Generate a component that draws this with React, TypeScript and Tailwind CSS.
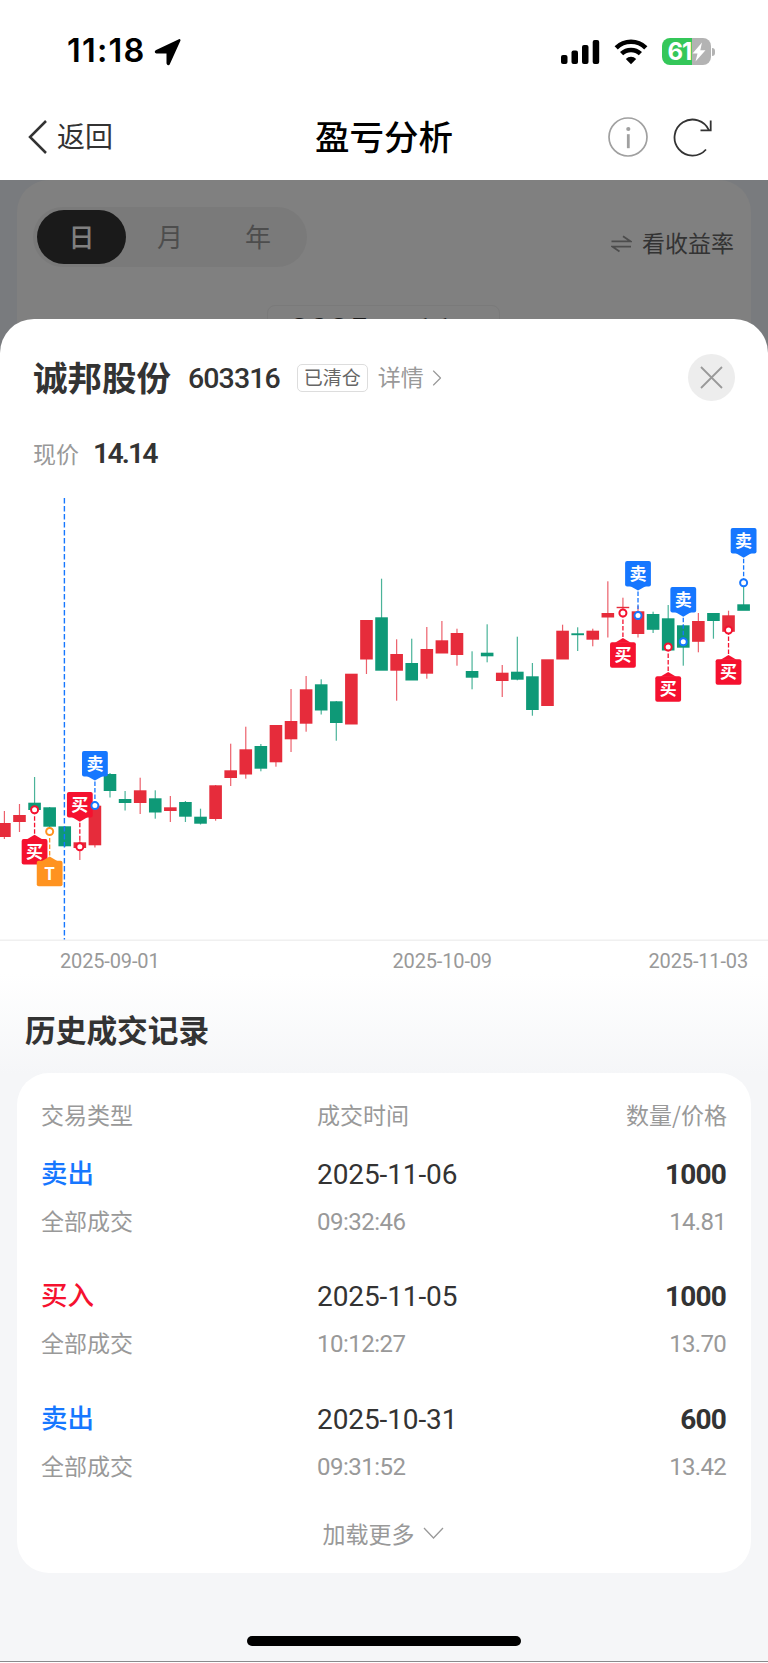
import { ChevronRight } from 'lucide-react';

type Candle = [open: 'r' | 'g', top: number, bottom: number, high: number, low: number];

// Body top/bottom and wick high/low, in chart pixels
const candles: Candle[] = [
  ['r', 823, 837, 811, 839], ['r', 815, 822, 804, 832], ['g', 802.7, 810, 777, 812], ['g', 807.3, 826.7, 807, 832],
  ['g', 826.3, 846.3, 826, 847], ['r', 842.3, 848, 840, 860], ['r', 805.7, 845.3, 805, 847.5], ['g', 774, 791, 773, 797.5],
  ['g', 799, 803, 791, 810.5], ['r', 790.3, 803, 777.7, 814], ['g', 798.3, 812.5, 790.3, 818.7], ['r', 807.3, 811, 796, 822],
  ['g', 802, 816.7, 801, 822], ['g', 816.7, 823.7, 808.7, 824.5], ['r', 785.3, 819, 785, 820.7], ['r', 770.3, 778, 743.7, 786],
  ['r', 749.3, 774.5, 726.7, 778.7], ['g', 746, 768.7, 744, 771.3], ['r', 725, 762.3, 725, 766.7], ['r', 721, 739.3, 689, 752],
  ['r', 689.3, 723.7, 676, 731.7], ['g', 684.3, 710.5, 679.3, 714.5], ['g', 701.3, 723, 701, 740.7], ['r', 673.7, 724.5, 674, 724],
  ['r', 620, 659.5, 620, 674], ['g', 617.3, 670.7, 578.7, 670], ['r', 654, 670.7, 639.3, 700.7], ['g', 663, 680.5, 638.7, 680],
  ['r', 649, 673.7, 627, 678.7], ['r', 640.3, 653.5, 621, 653], ['r', 633, 655, 628.7, 665.7], ['g', 671, 677.7, 651.3, 689.3],
  ['g', 652.7, 656.3, 624.3, 662.3], ['r', 672.7, 681, 665, 697], ['g', 671.7, 679.7, 636.7, 680.3], ['g', 676.3, 710, 663, 715.7],
  ['r', 659.3, 706, 660, 705], ['r', 630.7, 659.5, 624.7, 659], ['g', 633.3, 635.2, 627.3, 651], ['r', 630.7, 639.7, 628.7, 646.3],
  ['r', 613, 617.5, 581.3, 637.5], ['r', 606.8, 608.2, 597.7, 617], ['r', 611.3, 634, 606, 637.5], ['g', 614, 629.8, 611.7, 633],
  ['g', 618.3, 650.5, 605, 650], ['g', 625.3, 647.7, 625, 665.7], ['r', 621, 641.8, 613, 652.3], ['g', 613, 621, 613, 638.7],
  ['r', 615.3, 631.8, 610.7, 635], ['g', 604.3, 610.8, 582.7, 610],
];

// dir 1 hangs the flag below its dot, -1 puts it above
const markers = [
  { at: 2, y: 809.8, dir: 1, label: '买', color: '#f5112f' },
  { at: 3, y: 831.5, dir: 1, label: 'T', color: '#ff9320' },
  { at: 5, y: 846.8, dir: -1, label: '买', color: '#f5112f' },
  { at: 6, y: 805.6, dir: -1, label: '卖', color: '#1677ff' },
  { at: 41, y: 613, dir: 1, label: '买', color: '#f5112f' },
  { at: 42, y: 615.6, dir: -1, label: '卖', color: '#1677ff' },
  { at: 44, y: 647, dir: 1, label: '买', color: '#f5112f' },
  { at: 45, y: 641.8, dir: -1, label: '卖', color: '#1677ff' },
  { at: 48, y: 630, dir: 1, label: '买', color: '#f5112f' },
  { at: 49, y: 582.8, dir: -1, label: '卖', color: '#1677ff' },
];

const records = [
  { type: '卖出', color: 'text-[#1677ff]', date: '2025-11-06', time: '09:32:46', amount: '1000', price: '14.81' },
  { type: '买入', color: 'text-[#f5112f]', date: '2025-11-05', time: '10:12:27', amount: '1000', price: '13.70' },
  { type: '卖出', color: 'text-[#1677ff]', date: '2025-10-31', time: '09:31:52', amount: '600', price: '13.42' },
];

const candleX = (i: number) => 4.4 + i * 15.086;

function StatusBar() {
  return (
    <div className="flex h-[103px] items-center pl-[67px] pr-[53px]">
      <span className="font-['Inter'] text-[32.500px] font-semibold leading-none tracking-[1.200px] text-black">11:18</span>
      <svg className="ml-[9px]" width="28" height="28" viewBox="0 0 28 28">
        <path d="M25.4 2.2 15 25.4q-.8 1.6-1.4-.2V15.400q0-1-1-1H2.800q-1.800-.5-.2-1.400z" stroke="#000" strokeWidth="2.200" strokeLinejoin="round" />
      </svg>
      <div className="ml-auto flex items-center">
        <svg width="39" height="26" viewBox="0 0 39 26">
          <rect x="0" y="16" width="6.500" height="9" rx="2" />
          <rect x="10.500" y="11.500" width="6.500" height="13.500" rx="2" />
          <rect x="21" y="6" width="6.500" height="19" rx="2" />
          <rect x="31.700" y="1" width="6.500" height="24" rx="2" />
        </svg>
        <svg className="ml-[14px]" width="34" height="26" viewBox="0 0 34 26" fill="none" stroke="#000" strokeWidth="4.600">
          <path d="M2.200 8.800a21.200 21.200 0 0 1 29.600 0" />
          <path d="M7.600 14.700a13.600 13.600 0 0 1 18.800 0" />
          <path d="M17 25.200l-5.200-5.300a7.600 7.600 0 0 1 10.400 0z" fill="#000" stroke="none" />
        </svg>
        <div className="ml-[14px] flex h-[27px] w-[49px] items-center overflow-hidden rounded-[8px] bg-[linear-gradient(to_right,#34c759_0,#34c759_30.5px,#b3b3b3_30.5px)]">
          <span className="ml-[6px] font-['Inter'] text-[24px] font-bold leading-none tracking-[-1px] text-white">61</span>
          <svg className="ml-[0.500px] shrink-0" width="14" height="20" viewBox="0 0 14 20" fill="#fff">
            <path d="M10 .5.500 11.500h5L3.500 19.500 13.500 8.200H8.300z" />
          </svg>
        </div>
        <div className="ml-[1.500px] h-[8px] w-[3px] rounded-r-full bg-[#b3b3b3]" />
      </div>
    </div>
  );
}

function NavBar() {
  return (
    <div className="grid h-[77px] grid-cols-3 items-center pb-[10px]">
      <div className="flex items-center pl-[27px] text-[#333]">
        <svg width="22" height="36" viewBox="0 0 22 36" fill="none" stroke="currentColor" strokeWidth="2.500">
          <path d="M19 2 3 18l16 16" />
        </svg>
        <span className="ml-[8px] pb-[3px] text-[28px] leading-none">返回</span>
      </div>
      <h1 className="pb-[3px] text-center text-[34.500px] font-medium leading-none text-black">盈亏分析</h1>
      <div className="flex items-center justify-end pr-[55px]">
        <svg width="40" height="40" viewBox="0 0 40 40" fill="none" stroke="#a0a0a0">
          <circle cx="20" cy="20" r="19" strokeWidth="1.700" />
          <path d="M20.300 17.200v14" strokeWidth="2.800" />
          <circle cx="20.300" cy="12" r="2.100" fill="#a0a0a0" stroke="none" />
        </svg>
        <svg className="ml-[25px]" width="40" height="40" viewBox="0 0 40 40" fill="none" stroke="#333" strokeWidth="1.800">
          <path d="M33 32.500A18 18 0 1 1 36 13.300" />
          <path d="M37.700 3.500v9.800H27.500" />
        </svg>
      </div>
    </div>
  );
}

function Backdrop() {
  return (
    <div className="h-[173px] overflow-hidden bg-[#797b7e] px-[17px]">
      <div className="h-full rounded-t-[32px] bg-[#808080] pt-[27px]">
        <div className="flex items-center justify-between pl-[16px] pr-[17px]">
          <div className="flex h-[60px] w-[274px] items-center rounded-full bg-[#7a7a7a] pl-[4px] text-[26px] leading-none text-[#4d4d4d]">
            <span className="flex h-[54px] w-[89px] items-center justify-center rounded-full bg-[#1a1a1a] pb-[3px] font-medium text-[#808080]">日</span>
            <span className="w-[88px] pb-[3px] text-center">月</span>
            <span className="w-[88px] pb-[3px] text-center">年</span>
          </div>
          <div className="flex items-center pt-[12px] text-[#333]">
            <svg className="mt-px" width="21" height="18" viewBox="0 0 21 18" fill="none" stroke="#4d4d4d" strokeWidth="1.800">
              <path d="M.5 6.300h18.800l-7.300-5M20 11.600H1.200l7.300 5" />
            </svg>
            <span className="ml-[10px] pb-[2px] text-[23px] leading-none">看收益率</span>
          </div>
        </div>
        <div className="ml-[250px] mt-[38px] flex h-[60px] w-[233px] items-baseline rounded-[8px] border border-[#7a7a7a] pl-[22px] font-['Roboto'] text-[33px] font-medium leading-[49px] tracking-[1px] text-[#1a1a1a]">
          2025<span className="ml-[2px] font-['Noto_Sans_CJK_SC'] text-[26px]">年</span>
          <span className="ml-[16px]">11</span>
        </div>
      </div>
    </div>
  );
}

function KLineChart() {
  return (
    <svg className="block" width="768" height="450" viewBox="0 491 768 450">
      {candles.map(([kind, top, bottom, high, low], i) => {
        const fill = kind === 'r' ? '#e62c3b' : '#0e9977';
        return (
          <g key={i} fill={fill}>
            <rect x={candleX(i) - 0.6} y={high} width="1.2" height={low - high} fillOpacity="0.75" />
            <rect x={candleX(i) - 6.3} y={top} width="12.6" height={bottom - top} />
          </g>
        );
      })}
      <path d="M64.400 498V940" stroke="#1677ff" strokeWidth="1.400" strokeDasharray="5.500 2.500" />
      {markers.map(({ at, y, dir, label, color }) => {
        const x = candleX(at);
        const tip = y + dir * 25;
        const near = y + dir * 29.2;
        const box = dir === 1 ? near : near - 25.5;
        return (
          <g key={at}>
            <path d={`M${x} ${y}V${tip}`} stroke={color} strokeWidth="1.300" strokeDasharray="4.500 2" />
            <rect x={x - 12.9} y={box} width="25.8" height="25.5" rx="2" fill={color} />
            <path d={`M${x} ${tip}L${x - 8} ${near + dir * 0.5}H${x + 8}Z`} fill={color} />
            <circle cx={x} cy={y} r="3.500" fill="#fff" stroke={color} strokeWidth="2" />
            <text x={x} y={box + 18.9} textAnchor="middle" fill="#fff" className="text-[17px] font-bold">{label}</text>
          </g>
        );
      })}
      <path d="M0 940.200H768" stroke="#f0f0f0" strokeWidth="1.500" />
    </svg>
  );
}

function Records() {
  return (
    <div className="mx-[17px] h-[500px] rounded-[32px] bg-white px-[24px] pt-[26px] text-[#333]">
      <div className="grid h-[34px] grid-cols-[276px_1fr_auto] items-center pb-[2px] text-[23px] leading-none text-[#999]">
        <span>交易类型</span>
        <span>成交时间</span>
        <span>数量/价格</span>
      </div>
      {records.map((r) => (
        <div key={r.date} className="h-[122.700px] pt-[24px]">
          <div className="grid h-[36px] grid-cols-[276px_1fr_auto] items-center leading-none">
            <span className={`pb-[5px] text-[26.500px] font-medium ${r.color}`}>{r.type}</span>
            <span className="font-['Roboto'] text-[28px] tracking-[-0.100px]">{r.date}</span>
            <span className="pr-px font-['Roboto'] text-[28px] font-bold tracking-[-0.800px]">{r.amount}</span>
          </div>
          <div className="mt-[12px] grid h-[34px] grid-cols-[276px_1fr_auto] items-center leading-none text-[#999]">
            <span className="pb-[3px] text-[23px]">全部成交</span>
            <span className="font-['Roboto'] text-[24px] tracking-[-0.500px]">{r.time}</span>
            <span className="pr-px font-['Roboto'] text-[24px] tracking-[-0.700px]">{r.price}</span>
          </div>
        </div>
      ))}
      <div className="mt-[21px] flex items-center justify-center pr-[2px] text-[23px] leading-none text-[#999]">
        加载更多
        <svg className="ml-[8px]" width="21" height="14" viewBox="0 0 21 14" fill="none" stroke="currentColor" strokeWidth="1.300">
          <path d="M1 2l9.500 10L20 2" />
        </svg>
      </div>
    </div>
  );
}

export default function App() {
  return (
    <div className="h-[1663px] w-[768px] overflow-hidden bg-white font-['Noto_Sans_CJK_SC',sans-serif]">
      <StatusBar />
      <NavBar />
      <Backdrop />

      <div className="relative -mt-[34.500px] flex h-[1343px] flex-col rounded-t-[34px] bg-[linear-gradient(to_bottom,#fff_0,#fff_655px,#f5f6f8_755px)]">
        <div className="flex h-[118px] items-center pl-[33px] pr-[33px]">
          <h2 className="pb-[2px] text-[34.500px] font-bold leading-none text-[#333]">诚邦股份</h2>
          <span className="ml-[17px] pt-[3px] font-['Roboto'] text-[28.500px] font-medium leading-none tracking-[-0.900px] text-[#333]">603316</span>
          <span className="ml-[17px] flex h-[28px] w-[71px] items-center justify-center rounded-[5px] border border-[#ddd] pb-[2px] text-[19px] leading-none text-[#666]">已清仓</span>
          <span className="ml-[10px] pb-[2px] text-[23px] leading-none text-[#999]">详情</span>
          <ChevronRight className="-ml-px h-[34px] w-[28px] text-[#999]" strokeWidth={1} />
          <div className="ml-auto flex h-[47px] w-[47px] items-center justify-center rounded-full bg-[#ededed]">
            <svg width="23" height="23" viewBox="0 0 23 23" stroke="#999" strokeWidth="1.800">
              <path d="M1 1l21 21M22 1L1 22" />
            </svg>
          </div>
        </div>
        <div className="flex h-[54px] items-center pb-[17px] pl-[33px]">
          <span className="pb-[3px] text-[23px] leading-none text-[#999]">现价</span>
          <span className="ml-[14px] pb-px font-['Roboto'] text-[28.500px] font-semibold leading-none tracking-[-1.900px] text-[#333]">14.14</span>
        </div>

        <KLineChart />
        <div className="flex h-[42px] items-center pb-[2px] pl-[60px] pr-[20px] font-['Roboto'] text-[20px] leading-none tracking-[-0.150px] text-[#999]">
          <span>2025-09-01</span>
          <span className="ml-[233px]">2025-10-09</span>
          <span className="ml-auto">2025-11-03</span>
        </div>

        <h3 className="flex h-[90px] items-center pl-[25px] pt-[4px] text-[30.700px] font-bold leading-none text-[#333]">历史成交记录</h3>
        <Records />
        <div className="mx-auto mt-[63px] h-[10.500px] w-[274px] rounded-full bg-black" />
        <div className="mt-auto h-px bg-[#8a8a8c]" />
      </div>
    </div>
  );
}
